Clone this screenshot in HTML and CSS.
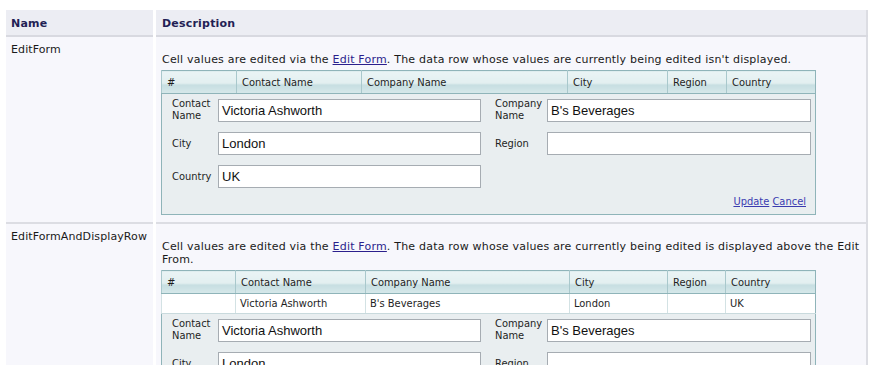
FILE: index.html
```html
<!DOCTYPE html>
<html>
<head>
<meta charset="utf-8">
<link rel="stylesheet" href="styles.css">
</head>
<body>
<div class="page">
<table class="outer">
  <thead>
    <tr><th class="c-name">Name</th><th class="c-desc">Description</th></tr>
  </thead>
  <tbody>
    <tr>
      <td class="c-name">EditForm</td>
      <td class="c-desc">
        <p class="desc">Cell values are edited via the <a href="#" class="doc">Edit Form</a>. The data row whose values are currently being edited isn't displayed.</p>
        <table class="grid g1">
          <tr class="ghead"><th class="w1">#</th><th class="w2">Contact Name</th><th class="w3">Company Name</th><th class="w4">City</th><th class="w5">Region</th><th class="w6">Country</th></tr>
          <tr><td colspan="6" class="formcell">
            <div class="form">
              <span class="lbl">Contact Name</span><span class="inp">Victoria Ashworth</span>
              <span class="lbl l2">Company Name</span><span class="inp">B's Beverages</span>
              <span class="lbl">City</span><span class="inp">London</span>
              <span class="lbl l2">Region</span><span class="inp"></span>
              <span class="lbl">Country</span><span class="inp">UK</span>
            </div>
            <div class="actions"><a href="#">Update</a> <a href="#">Cancel</a></div>
          </td></tr>
        </table>
      </td>
    </tr>
    <tr>
      <td class="c-name">EditFormAndDisplayRow</td>
      <td class="c-desc">
        <p class="desc">Cell values are edited via the <a href="#" class="doc">Edit Form</a>. The data row whose values are currently being edited is displayed above the Edit From.</p>
        <table class="grid g2">
          <tr class="ghead"><th class="v1">#</th><th class="v2">Contact Name</th><th class="v3">Company Name</th><th class="v4">City</th><th class="v5">Region</th><th class="v6">Country</th></tr>
          <tr class="drow"><td></td><td>Victoria Ashworth</td><td>B's Beverages</td><td>London</td><td></td><td>UK</td></tr>
          <tr><td colspan="6" class="formcell">
            <div class="form">
              <span class="lbl">Contact Name</span><span class="inp">Victoria Ashworth</span>
              <span class="lbl l2">Company Name</span><span class="inp">B's Beverages</span>
              <span class="lbl">City</span><span class="inp">London</span>
              <span class="lbl l2">Region</span><span class="inp"></span>
              <span class="lbl">Country</span><span class="inp">UK</span>
            </div>
            <div class="actions"><a href="#">Update</a> <a href="#">Cancel</a></div>
          </td></tr>
        </table>
      </td>
    </tr>
  </tbody>
</table>
</div>
</body>
</html>
```
FILE: styles.css
```css
html, body { margin: 0; padding: 0; background: #fff; }
.page { padding: 10px 3px 0 6px; }
.outer {
  border-collapse: collapse;
  width: 862px;
  font-family: "DejaVu Sans", Verdana, sans-serif;
  font-size: 11px;
  letter-spacing: 0.2px;
  color: #1a1a1a;
  border-right: 2px solid #dcdde3;
}
.outer > thead th {
  background: #ecedf3;
  color: #231f55;
  font-weight: bold;
  text-align: left;
  height: 24px;
  padding: 1px 0 0 5px;
  border-bottom: 2px solid #d8d9e0;
}
.outer th.c-name, .outer td.c-name { width: 142px; border-right: 3px solid #fff; }
.outer th.c-desc { padding-left: 6px; }
.outer > tbody > tr > td {
  background: #f7f7fc;
  vertical-align: top;
  border-bottom: 2px solid #dcdde3;
}
.outer > tbody > tr > td.c-name { padding: 6px 0 0 5px; line-height: 13px; letter-spacing: 0.1px; }
.outer > tbody > tr > td.c-desc { padding: 0 0 7px 5px; }
.desc { margin: 16px 0 4px 1px; line-height: 13px; }
a.doc { color: #2b1f8c; }

.grid {
  border-collapse: collapse;
  width: 655px;
  font-family: "DejaVu Sans Condensed", "Noto Sans", sans-serif;
  font-size: 11px;
  letter-spacing: 0;
  color: #1e1e1e;
  border: 1px solid #8fb4b9;
}
.ghead th {
  height: 22px;
  padding: 0 0 0 5px;
  text-align: left;
  font-weight: normal;
  background: linear-gradient(#eaf4f5 0, #e2eff0 55%, #c6dee1 60%, #d6e8ea 100%);
  border-left: 1px solid #a9c8cc;
  border-bottom: 1px solid #8fb4b9;
}
.g1 .w1 { width: 69px; } .g1 .w2 { width: 119px; } .g1 .w3 { width: 200px; }
.g1 .w4 { width: 94px; } .g1 .w5 { width: 53px; }
.g2 .v1 { width: 68px; } .g2 .v2 { width: 124px; } .g2 .v3 { width: 198px; }
.g2 .v4 { width: 92px; } .g2 .v5 { width: 52px; }
.drow td {
  height: 19px;
  padding: 0 0 0 4px;
  background: #fff;
  border-left: 1px solid #d3e2e4;
  border-bottom: 1px solid #c9dadd;
}
.formcell { background: #e9eef0; padding: 4px 4px 6px 10px; }
.form {
  display: grid;
  grid-template-columns: 46px 277px 52px 264px;
  row-gap: 10px;
  align-items: center;
}
.lbl { line-height: 12px; }
.inp {
  box-sizing: border-box;
  height: 23px;
  width: 263px;
  background: #fff;
  border: 1px solid #a6acb2;
  font-family: "Liberation Sans", Arial, sans-serif;
  font-size: 13px;
  line-height: 21px;
  padding-left: 3px;
  color: #111;
}
.l2 + .inp { width: 264px; }
.actions { text-align: right; padding: 7px 5px 0 0; line-height: 13px; }
.actions a { color: #3b3bb0; }
```
